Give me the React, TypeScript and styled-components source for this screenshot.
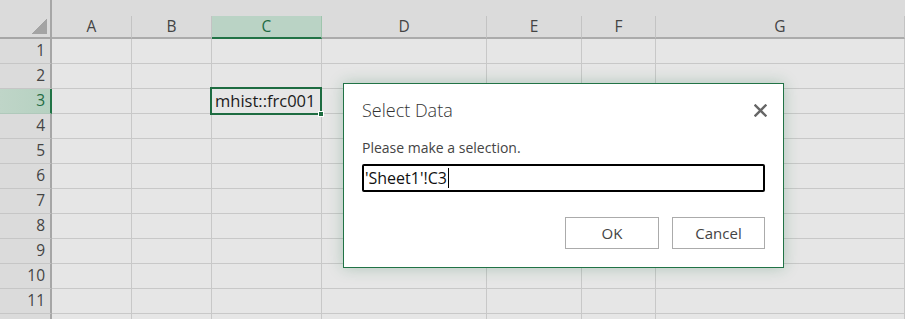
import React from "react";
import styled, { createGlobalStyle } from "styled-components";

const Global = createGlobalStyle`
  html, body { margin: 0; padding: 0; background: #e6e6e6; }
  body { width: 905px; height: 319px; overflow: hidden; font-family: "Open Sans", "Noto Sans", sans-serif; }
  * { box-sizing: border-box; }
`;

const Page = styled.div`
  position: relative;
  width: 905px;
  height: 319px;
  overflow: hidden;
  background: #e6e6e6;
`;

const HeaderRow = styled.div`
  display: flex;
  height: 39px;
  background: #dbdbdb;
`;

const Corner = styled.div`
  width: 52px;
  height: 39px;
  flex: none;
  border-right: 2px solid #a6a6a6;
  border-bottom: 2px solid #a6a6a6;
  display: flex;
  align-items: flex-end;
  justify-content: flex-end;
  padding: 0 3px 3px 0;
`;

const Triangle = styled.div`
  width: 15px;
  height: 15px;
  background: linear-gradient(to bottom right, transparent 50%, #a4a4a4 50%);
`;

const ColHeaders = styled.div`
  display: flex;
  align-items: flex-end;
  height: 39px;
  flex: 1;
`;

const ColHeader = styled.div<{ $w: number; $sel?: boolean }>`
  width: ${(p) => p.$w}px;
  flex: none;
  height: 23px;
  border-right: 1px solid ${(p) => (p.$sel ? "#9fc5ad" : "#c3c3c3")};
  border-bottom: ${(p) => (p.$sel ? "2px solid #217346" : "2px solid #ababab")};
  background: ${(p) => (p.$sel ? "#bad3c5" : "transparent")};
  color: ${(p) => (p.$sel ? "#1f6b43" : "#444")};
  font-size: 15.5px;
  display: flex;
  align-items: center;
  justify-content: center;
  line-height: 1;
`;

const Body = styled.div`
  display: flex;
  flex-direction: column;
`;

const Row = styled.div`
  display: flex;
  height: 25px;
`;

const RowHeader = styled.div<{ $sel?: boolean }>`
  width: 52px;
  flex: none;
  height: 25px;
  background: ${(p) =>
    p.$sel ? "linear-gradient(to right, #bfd5c8, #b6d1c1)" : "#dbdbdb"};
  border-right: 2px solid ${(p) => (p.$sel ? "#217346" : "#a6a6a6")};
  border-bottom: 1px solid ${(p) => (p.$sel ? "#b0c9bb" : "#c6c6c6")};
  color: ${(p) => (p.$sel ? "#1f6b43" : "#444")};
  font-size: 15.5px;
  display: flex;
  align-items: center;
  justify-content: flex-end;
  padding-right: 5px;
  line-height: 1;
`;

const Cell = styled.div<{ $w: number }>`
  width: ${(p) => p.$w}px;
  flex: none;
  height: 25px;
  border-right: 1px solid #c8c8c8;
  border-bottom: 1px solid #c8c8c8;
  position: relative;
`;

const ActiveCell = styled.div`
  position: absolute;
  left: -2px;
  top: -2px;
  right: -1px;
  bottom: -2px;
  border: 2px solid #1e6c41;
  z-index: 2;
  font-size: 16.5px;
  color: #1b1b1b;
  display: flex;
  align-items: center;
  padding-left: 3px;
  line-height: 1;
  white-space: nowrap;
`;

const FillHandle = styled.div`
  position: absolute;
  right: -4px;
  bottom: -4px;
  width: 6px;
  height: 6px;
  background: #1e6c41;
  border: 1px solid #fff;
`;

const Dialog = styled.div`
  position: absolute;
  left: 343px;
  top: 83px;
  width: 441px;
  height: 185px;
  background: #fff;
  border: 1px solid #217346;
  box-shadow: 0 0 14px rgba(33, 115, 70, 0.28);
  z-index: 5;
  display: flex;
  flex-direction: column;
  padding: 0 18px 0 18px;
`;

const TitleBar = styled.div`
  display: flex;
  align-items: center;
  justify-content: space-between;
  height: 46px;
  padding-top: 6px;
`;

const Title = styled.div`
  font-size: 18px;
  font-weight: 300;
  color: #333;
`;

const Close = styled.button`
  border: none;
  background: none;
  padding: 0;
  width: 16px;
  height: 16px;
  margin-right: -3px;
  display: flex;
  align-items: center;
  justify-content: center;
  cursor: pointer;
`;

const Prompt = styled.div`
  font-size: 14px;
  color: #444;
  margin-top: 8px;
  height: 22px;
`;

const InputBox = styled.div`
  margin-top: 4px;
  width: 403px;
  height: 28px;
  border: 2px solid #000;
  border-radius: 2px;
  display: flex;
  align-items: center;
  padding-left: 1px;
  font-size: 16px;
  color: #111;
`;

const Caret = styled.span`
  display: inline-block;
  width: 1px;
  height: 20px;
  background: #000;
  margin-left: 1px;
`;

const Buttons = styled.div`
  display: flex;
  justify-content: flex-end;
  gap: 13px;
  margin-top: 25px;
`;

const Btn = styled.button<{ $w: number }>`
  width: ${(p) => p.$w}px;
  height: 32px;
  background: #fff;
  border: 1px solid #ababab;
  font-family: "Open Sans", "Noto Sans", sans-serif;
  font-size: 15px;
  color: #444;
  padding: 0;
`;

const cols = [
  { l: "A", w: 80 },
  { l: "B", w: 80 },
  { l: "C", w: 110 },
  { l: "D", w: 165 },
  { l: "E", w: 95 },
  { l: "F", w: 74 },
  { l: "G", w: 249 },
];

export default function App() {
  const rows = Array.from({ length: 12 }, (_, i) => i + 1);
  return (
    <Page>
      <Global />
      <HeaderRow>
        <Corner>
          <Triangle />
        </Corner>
        <ColHeaders>
          {cols.map((c) => (
            <ColHeader key={c.l} $w={c.w} $sel={c.l === "C"}>
              {c.l}
            </ColHeader>
          ))}
        </ColHeaders>
      </HeaderRow>
      <Body>
        {rows.map((r) => (
          <Row key={r}>
            <RowHeader $sel={r === 3}>{r <= 11 ? r : ""}</RowHeader>
            {cols.map((c) => (
              <Cell key={c.l} $w={c.w}>
                {r === 3 && c.l === "C" && (
                  <ActiveCell>
                    mhist::frc001
                    <FillHandle />
                  </ActiveCell>
                )}
              </Cell>
            ))}
          </Row>
        ))}
      </Body>
      <Dialog>
        <TitleBar>
          <Title>Select Data</Title>
          <Close aria-label="Close">
            <svg width="13" height="13" viewBox="0 0 13 13">
              <path d="M1.5 1.5 L11.5 11.5 M11.5 1.5 L1.5 11.5" stroke="#666" strokeWidth="2.4" strokeLinecap="square" />
            </svg>
          </Close>
        </TitleBar>
        <Prompt>Please make a selection.</Prompt>
        <InputBox>
          'Sheet1'!C3<Caret />
        </InputBox>
        <Buttons>
          <Btn $w={94}>OK</Btn>
          <Btn $w={93}>Cancel</Btn>
        </Buttons>
      </Dialog>
    </Page>
  );
}
